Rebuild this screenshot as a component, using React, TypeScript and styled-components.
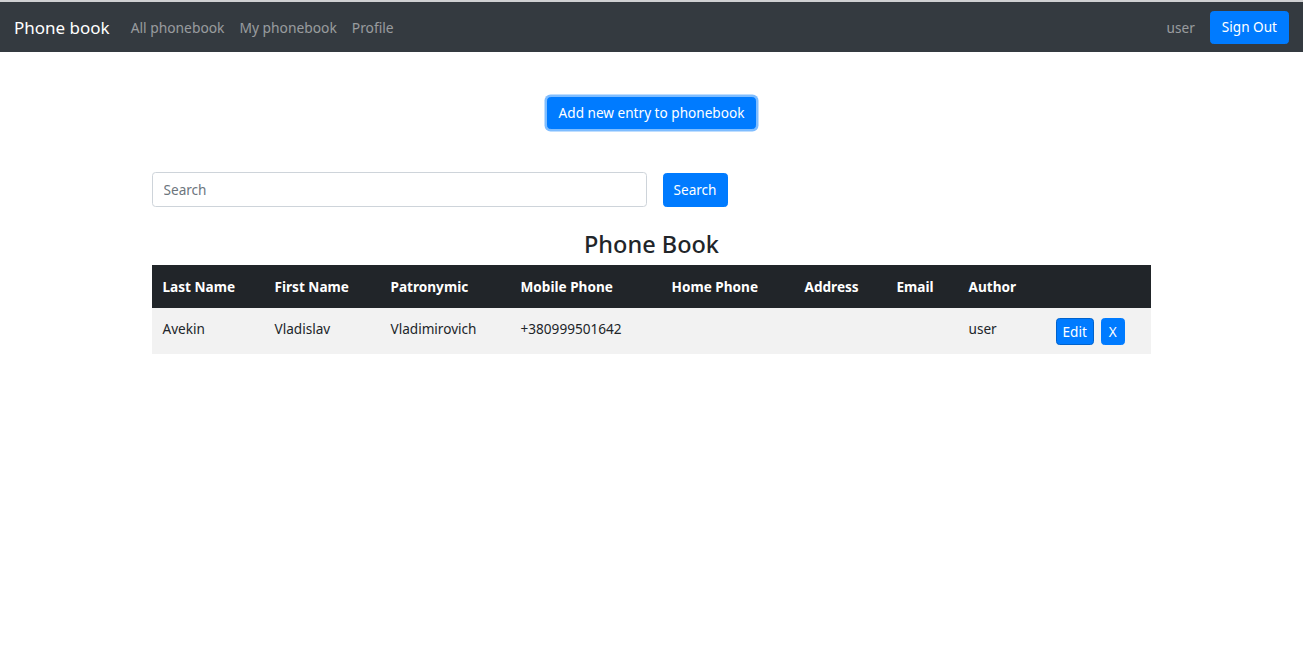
import React from "react";
import styled, { createGlobalStyle } from "styled-components";

const Global = createGlobalStyle`
  html, body { margin: 0; padding: 0; background: #fff; }
  body {
    font-family: "Noto Sans", "Open Sans", "Liberation Sans", sans-serif;
    font-size: 13.6px;
    color: #212529;
    border-top: 2px solid #cfd0d2;
  }
  * { box-sizing: border-box; }
`;

const NavBar = styled.nav`
  height: 50px;
  background: #343a40;
  display: flex;
  align-items: center;
  padding: 0 14px;
`;

const Brand = styled.a`
  color: #fff;
  font-size: 17px;
  margin-right: 21px;
  text-decoration: none;
`;

const NavLink = styled.a`
  color: rgba(255, 255, 255, 0.5);
  font-size: 13.8px;
  margin-right: 15px;
  text-decoration: none;
`;

const Spacer = styled.div`
  flex: 1;
`;

const UserName = styled.span`
  color: rgba(255, 255, 255, 0.5);
  font-size: 13.6px;
  margin-right: 15px;
`;

const Button = styled.button<{ $h?: number; $px?: number; $ring?: boolean; $dark?: boolean }>`
  font-family: inherit;
  font-size: 13.6px;
  color: #fff;
  background: #007bff;
  border: 1px solid ${(p) => (p.$dark ? "#0062cc" : "#007bff")};
  border-radius: 3.6px;
  height: ${(p) => p.$h ?? 34}px;
  padding: 0 ${(p) => p.$px ?? 11}px;
  box-shadow: ${(p) => (p.$ring ? "0 0 0 2.5px rgba(0,123,255,0.5)" : "none")};
  cursor: pointer;
  line-height: 1;
`;

const Main = styled.main`
  width: 1000px;
  margin: 0 auto;
  display: flex;
  flex-direction: column;
`;

const TopAction = styled.div`
  display: flex;
  justify-content: center;
  margin-top: 45px;
`;

const SearchRow = styled.div`
  display: flex;
  align-items: center;
  gap: 16px;
  margin-top: 43px;
`;

const SearchInput = styled.input`
  width: 495px;
  height: 35px;
  border: 1px solid #ced4da;
  border-radius: 3.6px;
  padding: 0 11px;
  font-family: inherit;
  font-size: 13.6px;
  color: #495057;
  &::placeholder { color: #6c757d; }
`;

const Title = styled.h3`
  text-align: center;
  font-weight: 500;
  font-size: 23.5px;
  margin: 23px 0 7px;
  line-height: 1.2;
`;

const Table = styled.table`
  width: 999px;
  border-collapse: collapse;
  table-layout: fixed;
`;

const Th = styled.th<{ $w: number }>`
  width: ${(p) => p.$w}px;
  background: #212529;
  color: #fff;
  text-align: left;
  font-weight: 700;
  font-size: 13.6px;
  padding: 0 11px;
  height: 43px;
`;

const Row = styled.tr`
  background: #f2f2f2;
`;

const Td = styled.td`
  vertical-align: top;
  padding: 11px 11px 0;
  height: 46px;
  font-size: 13.6px;
  white-space: nowrap;
`;

const Actions = styled.div`
  display: flex;
  gap: 7px;
  margin-top: -1px;
`;

const cols: [string, number][] = [
  ["Last Name", 112],
  ["First Name", 116],
  ["Patronymic", 130],
  ["Mobile Phone", 151],
  ["Home Phone", 133],
  ["Address", 92],
  ["Email", 72],
  ["Author", 87],
  ["", 106],
];

export default function App() {
  return (
    <>
      <Global />
      <NavBar>
        <Brand href="#">Phone book</Brand>
        <NavLink href="#">All phonebook</NavLink>
        <NavLink href="#">My phonebook</NavLink>
        <NavLink href="#">Profile</NavLink>
        <Spacer />
        <UserName>user</UserName>
        <Button $h={33} $px={11}>Sign Out</Button>
      </NavBar>
      <Main>
        <TopAction>
          <Button $h={32} $px={11} $ring>Add new entry to phonebook</Button>
        </TopAction>
        <SearchRow>
          <SearchInput placeholder="Search" />
          <Button $h={34} $px={10}>Search</Button>
        </SearchRow>
        <Title>Phone Book</Title>
        <Table>
          <thead>
            <tr>
              {cols.map(([c, w], i) => (
                <Th key={i} $w={w}>{c}</Th>
              ))}
            </tr>
          </thead>
          <tbody>
            <Row>
              <Td>Avekin</Td>
              <Td>Vladislav</Td>
              <Td>Vladimirovich</Td>
              <Td>+380999501642</Td>
              <Td></Td>
              <Td></Td>
              <Td></Td>
              <Td>user</Td>
              <Td>
                <Actions>
                  <Button $h={27} $px={6} $dark>Edit</Button>
                  <Button $h={27} $px={7}>X</Button>
                </Actions>
              </Td>
            </Row>
          </tbody>
        </Table>
      </Main>
    </>
  );
}
